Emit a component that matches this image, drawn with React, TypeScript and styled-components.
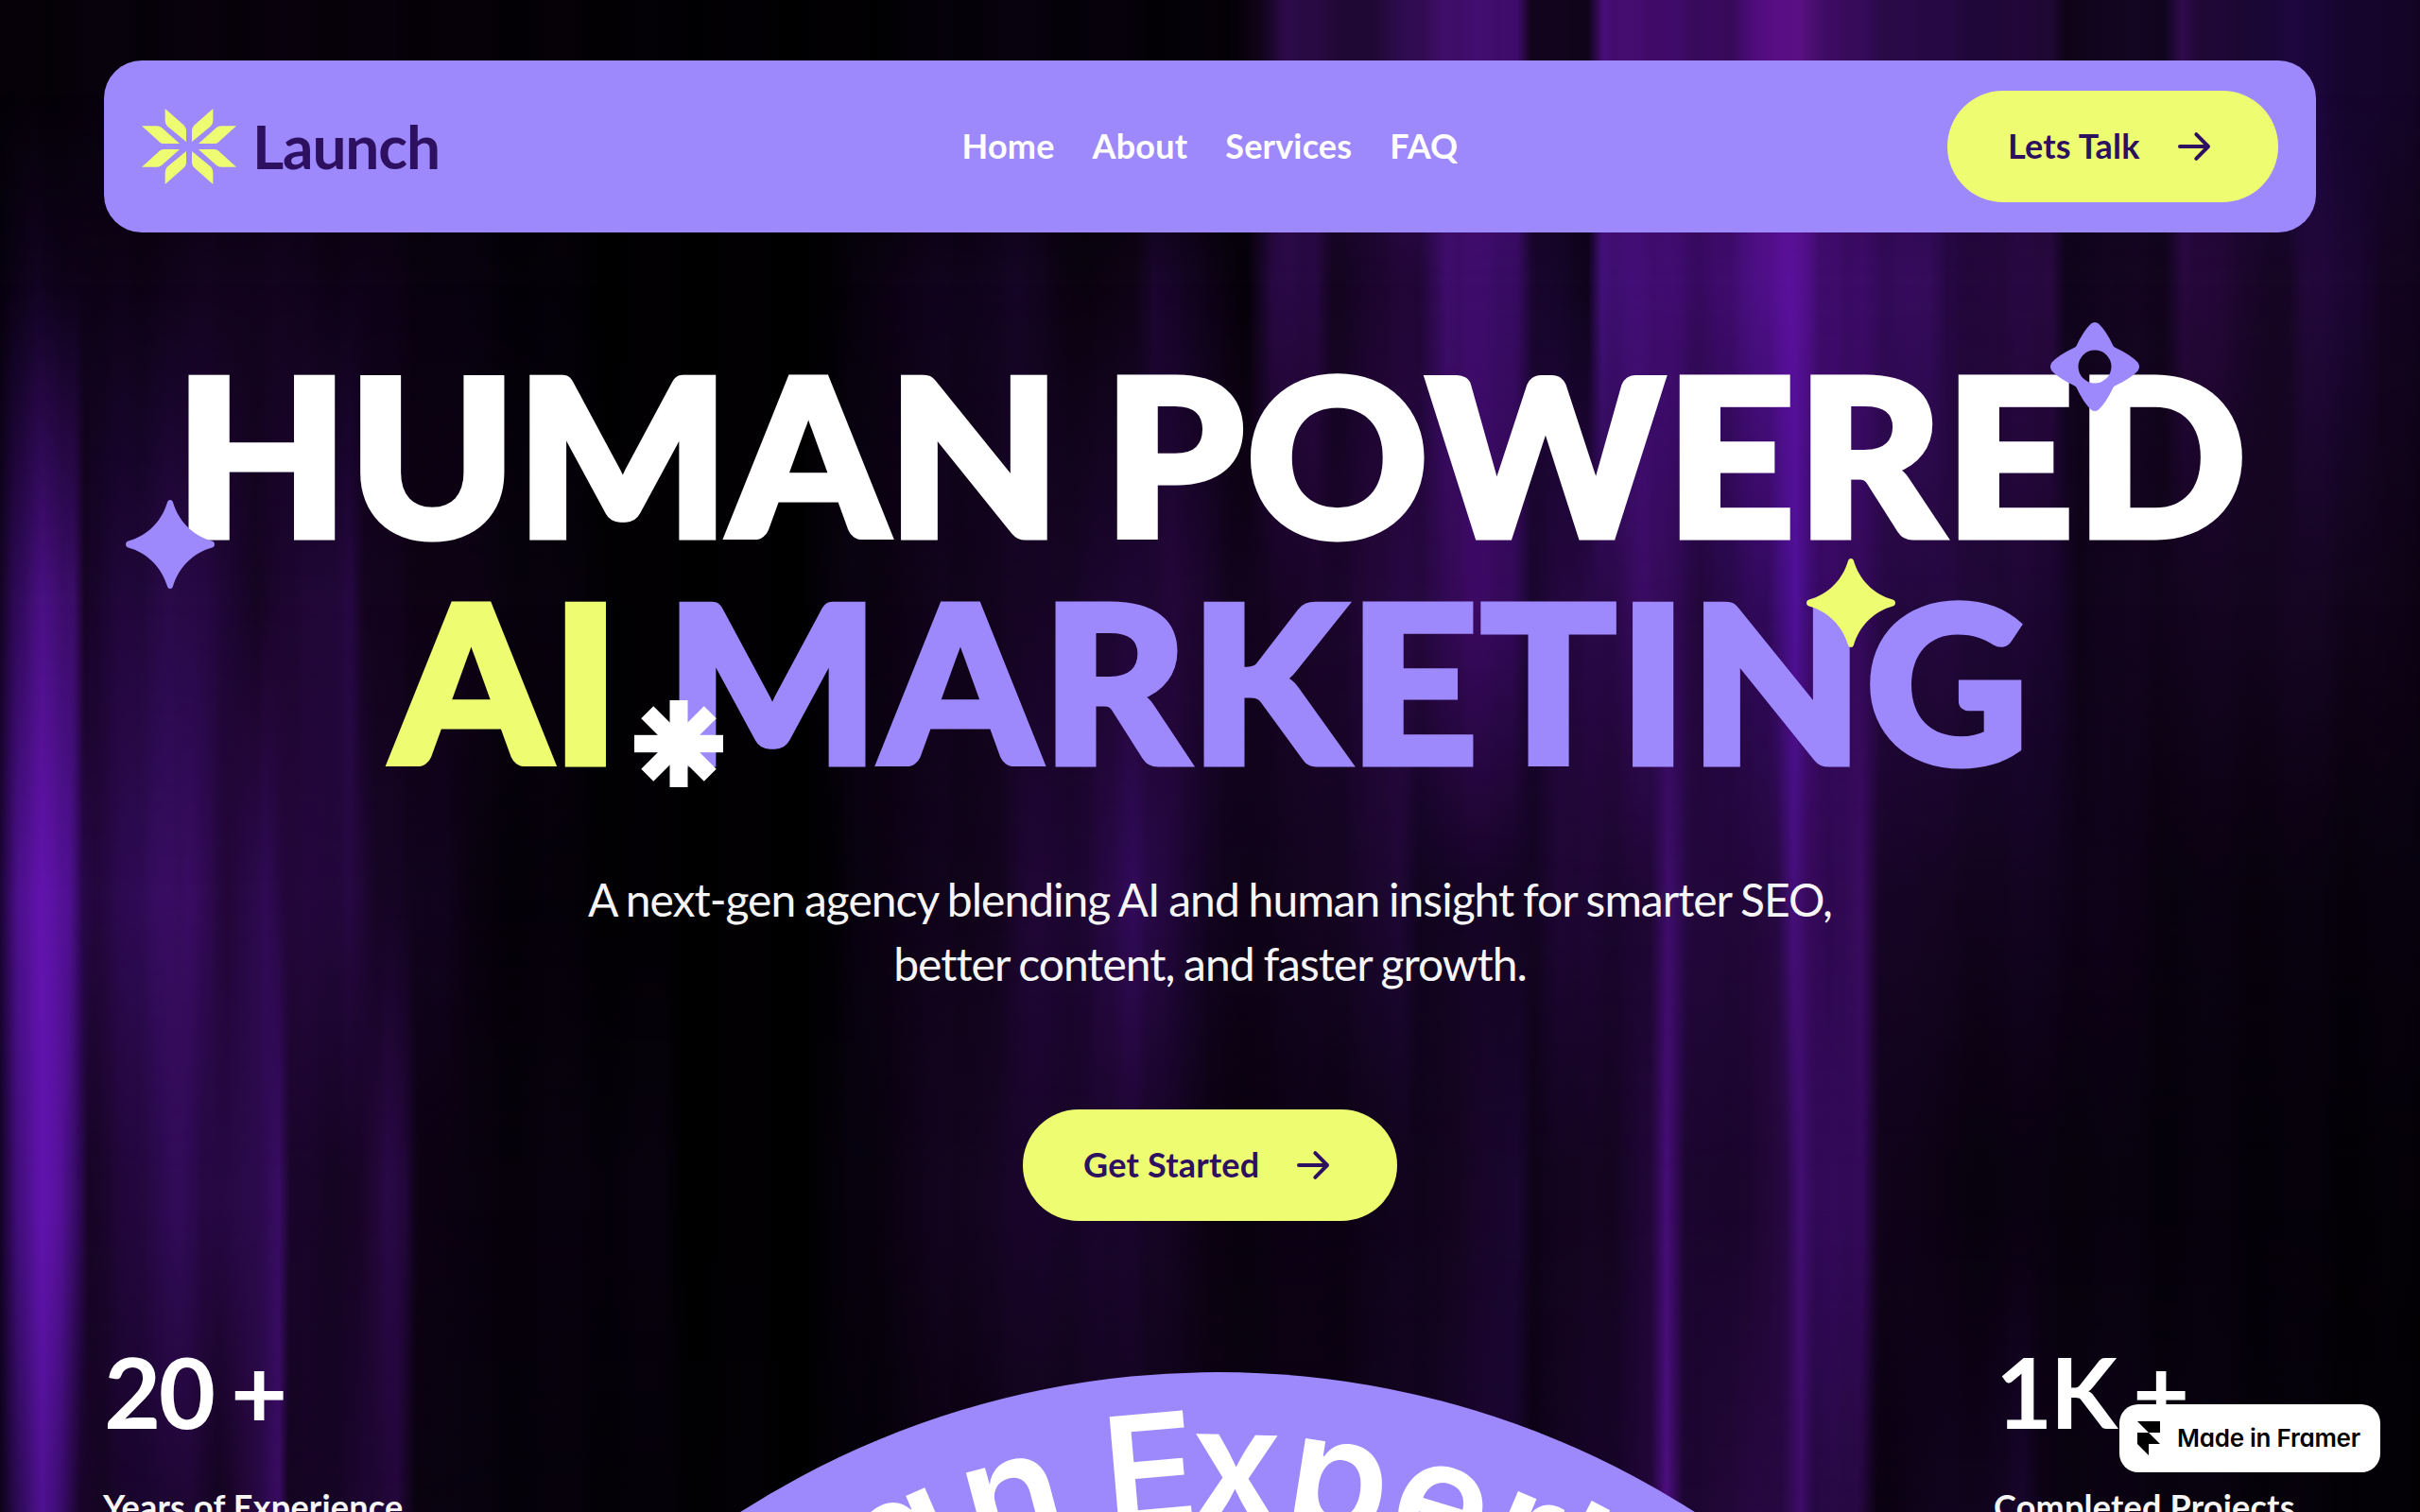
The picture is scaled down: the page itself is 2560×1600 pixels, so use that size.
import React from 'react';
import styled, { createGlobalStyle } from 'styled-components';

const PURPLE = '#9e89fc';
const LIME = '#eefc72';
const INK = '#2d1160';

type Stop = [number, string];

type Band = {
	from: number,
	to: number,
	stops: Stop[],
};

// Every band is the curtain's colours at one height; each fades in over the one above.
const BANDS: Band[] = [
	{
		from: -1, to: 0, stops: [
			[0, '#020003'], [80, '#050108'], [300, '#060109'], [600, '#020003'], [900, '#000'], [1060, '#05010a'],
			[1300, '#020003'], [1335, '#12041c'], [1360, '#2a0a45'], [1450, '#1c0830'], [1525, '#3d0d66'],
			[1605, '#3f0b6b'], [1620, '#12041c'], [1680, '#0c0315'], [1697, '#4a0d7a'], [1740, '#3f0a66'],
			[1830, '#35095a'], [1872, '#560c82'], [1905, '#5c1086'], [1930, '#3b0b60'], [2000, '#2a0948'],
			[2050, '#220840'], [2170, '#1c0730'], [2185, '#0e0418'], [2290, '#100520'], [2308, '#2e0a4a'],
			[2330, '#1c0730'], [2430, '#1a0638'], [2560, '#10031f'],
		]
	},
	{
		from: 100, to: 300, stops: [
			[0, '#04010a'], [40, '#10031f'], [100, '#0a0212'], [250, '#12031c'], [370, '#0d0216'], [500, '#05010a'],
			[660, '#000'], [880, '#000'], [930, '#0a0212'], [1080, '#120420'], [1150, '#08020c'], [1200, '#0c0312'],
			[1220, '#1c0530'], [1280, '#0a0212'], [1320, '#050108'], [1345, '#26083f'], [1390, '#26083f'],
			[1410, '#14041f'], [1500, '#200636'], [1530, '#3c0c68'], [1605, '#360b60'], [1622, '#1a0630'],
			[1680, '#0c0318'], [1695, '#42107a'], [1750, '#3e0c6e'], [1800, '#380a62'], [1850, '#440d78'],
			[1893, '#5a109c'], [1912, '#540f90'], [1925, '#3c0b68'], [1990, '#350a5c'], [2040, '#340b5a'],
			[2060, '#22073c'], [2170, '#26083c'], [2185, '#10041c'], [2290, '#12041c'], [2310, '#26083c'],
			[2420, '#14051f'], [2440, '#200838'], [2490, '#1c0634'], [2520, '#12031c'], [2560, '#0e0318'],
		]
	},
	{
		from: 300, to: 640, stops: [
			[0, '#12031f'], [15, '#2a0850'], [45, '#4a0f84'], [78, '#3a0c68'], [90, '#14031f'], [110, '#1a0530'],
			[180, '#280a48'], [240, '#1e0636'], [270, '#160422'], [370, '#240840'], [385, '#12031c'], [450, '#0e0214'],
			[530, '#08020e'], [680, '#000'], [850, '#000'], [900, '#08020e'], [1080, '#14041f'], [1200, '#1c0630'],
			[1240, '#220738'], [1300, '#12031c'], [1370, '#160422'], [1500, '#260840'], [1550, '#38095c'],
			[1600, '#34095a'], [1620, '#1a0630'], [1700, '#2a0848'], [1740, '#380b60'], [1800, '#22073c'],
			[1870, '#30095a'], [1900, '#50109a'], [1925, '#34095c'], [1960, '#34095a'], [2010, '#22083c'],
			[2080, '#200838'], [2180, '#18052a'], [2200, '#0e0318'], [2300, '#12041c'], [2450, '#14051f'], [2560, '#0a0210'],
		]
	},
	{
		from: 640, to: 950, stops: [
			[0, '#180430'], [20, '#4c0f8c'], [45, '#6213ac'], [72, '#54119a'], [88, '#240745'], [100, '#200638'],
			[160, '#360c60'], [200, '#360b5e'], [240, '#220638'], [280, '#300a54'], [300, '#200636'], [370, '#240840'],
			[400, '#140420'], [470, '#10031c'], [500, '#06010a'], [700, '#000'], [880, '#000'], [920, '#0a0212'],
			[1060, '#12041c'], [1090, '#1e0634'], [1150, '#1c0630'], [1200, '#300a56'], [1230, '#240840'],
			[1280, '#10031c'], [1350, '#0e0318'], [1400, '#14041f'], [1480, '#1c0730'], [1500, '#120420'],
			[1620, '#140422'], [1650, '#1c0630'], [1745, '#1c0630'], [1765, '#3a0c64'], [1785, '#240840'],
			[1850, '#1e0634'], [1880, '#26083f'], [1897, '#460f7c'], [1915, '#38095c'], [1935, '#2a0848'],
			[1968, '#360b5a'], [1988, '#180528'], [2060, '#12041c'], [2160, '#10031c'], [2300, '#08020e'], [2560, '#05010a'],
		]
	},
	{
		from: 950, to: 1250, stops: [
			[0, '#100220'], [20, '#420d7c'], [45, '#6013ac'], [65, '#58119e'], [85, '#2a0850'], [94, '#14041f'],
			[130, '#1e0636'], [190, '#320b58'], [215, '#22073c'], [280, '#2e0a50'], [295, '#340b5c'], [307, '#180528'],
			[380, '#160422'], [410, '#260842'], [430, '#200636'], [442, '#0c0214'], [500, '#06010a'], [700, '#05010a'],
			[720, '#000'], [860, '#000'], [900, '#05010a'], [1010, '#12041c'], [1100, '#180528'], [1200, '#180528'],
			[1230, '#160424'], [1280, '#08020c'], [1400, '#0a0212'], [1480, '#0e0318'], [1550, '#14041f'],
			[1605, '#1a0630'], [1622, '#0e0318'], [1700, '#14041f'], [1745, '#1e0634'], [1763, '#420c70'],
			[1782, '#1c0630'], [1850, '#180528'], [1888, '#26083f'], [1905, '#440e76'], [1922, '#300954'],
			[1970, '#300954'], [1988, '#12031c'], [2060, '#08020e'], [2300, '#05010a'], [2560, '#020003'],
		]
	},
	{
		from: 1280, to: 1600, stops: [
			[0, '#0a0214'], [20, '#2c0a54'], [45, '#4e1190'], [65, '#3c0c70'], [85, '#160424'], [110, '#14041f'],
			[150, '#1a0530'], [200, '#1c0630'], [230, '#12031c'], [270, '#26083f'], [295, '#340b5c'], [305, '#12031c'],
			[400, '#1c0630'], [420, '#200636'], [440, '#0a0210'], [500, '#05010a'], [850, '#000'], [1000, '#08020e'],
			[1200, '#12041c'], [1280, '#0a0210'], [1400, '#0a0210'], [1600, '#1a0630'], [1620, '#0c0214'],
			[1745, '#1e0634'], [1763, '#480e78'], [1780, '#1c0630'], [1885, '#26083f'], [1905, '#400c6c'],
			[1920, '#240840'], [1965, '#26083f'], [1985, '#0a0212'], [2100, '#10031c'], [2140, '#160428'],
			[2160, '#0a0212'], [2300, '#08020e'], [2560, '#000'],
		]
	},
];

const GlobalStyle = createGlobalStyle`
* { box-sizing: border-box; }
body {
	margin: 0;
	background: #000;
	font-family: Lato, sans-serif;
	overflow: hidden;
}
`;

const Page = styled.div`
position: relative;
isolation: isolate;
display: flex;
flex-direction: column;
align-items: center;
width: 2560px;
height: 1600px;
padding: 64px 110px 0;
overflow: hidden;
`;

const Backdrop = styled.div`
position: absolute;
inset: 0;
z-index: -1;
filter: brightness(1.05);
`;

const Curtain = styled.div<{ $band: Band }>`
position: absolute;
inset: 0;
background: linear-gradient(90deg, ${p => p.$band.stops.map(([x, c]) => `${c} ${x}px`).join(', ')});
mask-image: linear-gradient(180deg, transparent ${p => p.$band.from}px, #000 ${p => p.$band.to}px);
`;

const Pleats = styled.div`
position: absolute;
inset: 0;
background:
	repeating-linear-gradient(90deg, rgba(0, 0, 0, 0) 0 14px, rgba(0, 0, 0, .05) 24px 29px, rgba(0, 0, 0, 0) 41px),
	repeating-linear-gradient(90deg, rgba(110, 25, 180, .02) 0 31px, rgba(0, 0, 0, .05) 50px 62px, rgba(110, 25, 180, .02) 97px);
`;

const Navbar = styled.header`
display: grid;
grid-template-columns: 1fr auto 1fr;
align-items: center;
flex: none;
width: 100%;
height: 182px;
padding: 0 40px;
border-radius: 40px;
background: ${PURPLE};
`;

const Brand = styled.div`
display: flex;
align-items: center;
gap: 17px;
color: ${INK};
font-size: 64px;
font-weight: 700;
letter-spacing: -0.018em;
line-height: 80px;
`;

const Links = styled.nav`
display: flex;
gap: 40px;
padding-bottom: 2px;
`;

const NavLink = styled.a`
color: #fff;
font-size: 36px;
font-weight: 700;
letter-spacing: 0.005em;
line-height: 44px;
`;

const Button = styled.button<{ $width: number }>`
display: flex;
align-items: center;
justify-content: space-between;
justify-self: end;
flex: none;
width: ${p => p.$width}px;
height: 118px;
padding: 0 64px 2px;
border: 0;
border-radius: 60px;
background: ${LIME};
color: ${INK};
font: 700 36px/44px Lato, sans-serif;
letter-spacing: 0.006em;
`;

const Headline = styled.h1`
position: relative;
flex: none;
width: 100%;
margin: 113px 0 0;
color: #fff;
font-size: 231px;
font-weight: 900;
line-height: 240px;
text-align: center;
white-space: nowrap;
`;

// Lato stops at bold here, so the outline brings it up to black.
const Line = styled.span<{ $gap: number }>`
display: block;
padding-left: 4px;
word-spacing: ${p => p.$gap}px;
transform: scaleX(1.025);
-webkit-text-stroke: 7.2px currentColor;
`;

const Word = styled.span<{ $color?: string, $spacing: number }>`
color: ${p => p.$color || '#fff'};
letter-spacing: ${p => p.$spacing}px;
-webkit-text-stroke-color: ${p => p.$color || '#fff'};
`;

const Ornament = styled.svg<{ $x: number, $y: number }>`
position: absolute;
left: ${p => p.$x}px;
top: ${p => p.$y}px;
width: 94px;
height: 94px;
`;

const Lead = styled.p`
flex: none;
margin: 79px 0 121px;
color: #f6f5f7;
font-size: 48px;
letter-spacing: -0.021em;
word-spacing: -0.03em;
line-height: 67.6px;
text-align: center;
`;

const Stats = styled.section`
display: flex;
justify-content: space-between;
flex: none;
width: 100%;
margin-top: 128px;
`;

const Stat = styled.div<{ $width: number }>`
display: flex;
flex-direction: column;
gap: 48px;
width: ${p => p.$width}px;
white-space: nowrap;
`;

const StatValue = styled.div<{ $indent?: number }>`
padding-left: ${p => p.$indent || 0}px;
color: #fff;
font-size: 104px;
font-weight: 700;
letter-spacing: -0.025em;
line-height: 104px;
word-spacing: -0.04em;
`;

const StatLabel = styled.div<{ $indent?: number }>`
margin-left: ${p => p.$indent || 0}px;
color: #f5f5f5;
font-size: 36px;
font-weight: 700;
letter-spacing: 0.006em;
line-height: 44px;
`;

const Seal = styled.svg`
flex: none;
width: 1870px;
height: 1870px;
margin: 32px -770px 0 -754px;
`;

const SealText = styled.text`
fill: #fff;
font-family: Inter, sans-serif;
font-size: 172px;
font-weight: 600;
font-feature-settings: 'cv11';
`;

const SealCap = styled.tspan`
font-size: 164px;
`;

const SealWide = styled.tspan`
letter-spacing: 9px;
`;

const Badge = styled.a`
position: absolute;
right: 42px;
bottom: 42px;
display: flex;
align-items: center;
gap: 18px;
width: 276px;
height: 72px;
padding-left: 19px;
border-radius: 20px;
background: #fff;
color: #000;
font: 600 26px/32px Inter, sans-serif;
font-feature-settings: 'cv11';
letter-spacing: -0.01em;
white-space: nowrap;
`;

const Arrow = () => (
	<svg width="48" height="48" viewBox="0 0 48 48" fill="none" stroke={INK}
		strokeWidth="4" strokeLinecap="round" strokeLinejoin="round">
		<path d="M8 25H38M25.300 12.200L38 25L25.300 37.800" />
	</svg>
);

const LogoQuarter = ({ transform }: { transform?: string }) => (
	<g transform={transform}>
		<path d="M24.700 0L44.500 17.500Q47 20 47 23V35L27 18.500Q24.700 16 24.700 13Z" />
		<path d="M0 18.300H16Q19 18.300 21 20L40 37H23Q20.500 37 19 35.500Z" />
	</g>
);

const Logo = () => (
	<svg width="100" height="80" viewBox="0 0 100 80" fill={LIME}>
		<LogoQuarter />
		<LogoQuarter transform="matrix(-1 0 0 1 100 0)" />
		<LogoQuarter transform="matrix(1 0 0 -1 0 80)" />
		<LogoQuarter transform="matrix(-1 0 0 -1 100 80)" />
	</svg>
);

type OrnamentProps = { x: number, y: number, color: string };

const Sparkle = ({ x, y, color }: OrnamentProps) => (
	<Ornament $x={x} $y={y} viewBox="-47 -47 94 94" fill={color}>
		<path d="M-2.800 -45Q-2.200 -47 0 -47Q2.200 -47 2.800 -45C9 -24 24 -9 45 -3.200Q47 -2.500 47 0Q47 2.500 45 3.200C24 9 9 24 2.800 45Q2.200 47 0 47Q-2.200 47 -2.800 45C-9 24 -24 9 -45 3.200Q-47 2.500 -47 0Q-47 -2.500 -45 -3.200C-24 -9 -9 -24 -2.800 -45Z" />
	</Ornament>
);

const Eyelet = ({ x, y, color }: OrnamentProps) => (
	<Ornament $x={x} $y={y} viewBox="-47 -47 94 94" fill={color} fillRule="evenodd">
		<path d="M-4 -45.500Q0 -48.500 4 -45.500Q12 -38 19.500 -22Q20 -21 21.500 -20.300Q38 -12.500 45.500 -4.500Q48.500 0 45.500 4.500Q38 12.500 21.500 20.300Q20 21 19.500 22Q12 38 4 45.500Q0 48.500 -4 45.500Q-12 38 -19.500 22Q-20 21 -21.500 20.300Q-38 12.500 -45.500 4.500Q-48.500 0 -45.500 -4.500Q-38 -12.500 -21.500 -20.300Q-20 -21 -19.500 -22Q-12 -38 -4 -45.500ZM17.500 0A17.500 17.500 0 1 0 -17.500 0A17.500 17.500 0 1 0 17.500 0Z" />
	</Ornament>
);

const Asterisk = ({ x, y, color }: OrnamentProps) => (
	<Ornament $x={x} $y={y} viewBox="-47 -47 94 94" fill={color}>
		<rect x="-9.500" y="-46" width="19" height="92" />
		<rect x="-47" y="-9.200" width="94" height="18.400" />
		<rect x="-47" y="-9.200" width="94" height="18.400" transform="rotate(45)" />
		<rect x="-47" y="-9.200" width="94" height="18.400" transform="rotate(-45)" />
	</Ornament>
);

const LINKS = ['Home', 'About', 'Services', 'FAQ'];

export default function App() {
	return <>
		<GlobalStyle />
		<Page>
			<Backdrop>
				{BANDS.map(band => <Curtain key={band.to} $band={band} />)}
				<Pleats />
			</Backdrop>
			<Navbar>
				<Brand><Logo />Launch</Brand>
				<Links>
					{LINKS.map(link => <NavLink key={link}>{link}</NavLink>)}
				</Links>
				<Button $width={350}>Lets Talk<Arrow /></Button>
			</Navbar>
			<Headline>
				<Line $gap={-11}>
					<Word $spacing={0.6}>HUMAN</Word> <Word $spacing={2.6}>POWERED</Word>
				</Line>
				<Line $gap={-9}>
					<Word $spacing={2} $color={LIME}>AI</Word> <Word $spacing={3.2} $color={PURPLE}>MARKETING</Word>
				</Line>
				<Sparkle x={23} y={170} color={PURPLE} />
				<Sparkle x={1801} y={232} color={LIME} />
				<Eyelet x={2059} y={-18} color={PURPLE} />
				<Asterisk x={561} y={381} color="#fff" />
			</Headline>
			<Lead>
				A next-gen agency blending AI and human insight for smarter SEO,<br />
				better content, and faster growth.
			</Lead>
			<Button $width={396}>Get Started<Arrow /></Button>
			<Stats>
				<Stat $width={342}>
					<StatValue>20 +</StatValue>
					<StatLabel $indent={-1}>Years of Experience</StatLabel>
				</Stat>
				<Seal viewBox="0 0 1870 1870">
					<circle cx="935" cy="935" r="935" fill={PURPLE} />
					<path id="ring" fill="none" d="M160 935A775 775 0 0 1 1710 935" />
					<SealText textAnchor="end">
						<textPath href="#ring" startOffset="1074"><SealWide>Human</SealWide></textPath>
					</SealText>
					<SealText>
						<textPath href="#ring" startOffset="1101"><SealCap>E</SealCap><tspan dx="-14">xper</tspan><tspan dx="-8">tise</tspan></textPath>
					</SealText>
				</Seal>
				<Stat $width={342}>
					<StatValue $indent={3}>1K +</StatValue>
					<StatLabel $indent={1}>Completed Projects</StatLabel>
				</Stat>
			</Stats>
			<Badge>
				<svg width="24" height="36" viewBox="0 0 24 36">
					<path d="M0 0H24V12H12ZM0 12H12L24 24H12V36L0 24Z" />
				</svg>
				Made in Framer
			</Badge>
		</Page>
	</>;
};
